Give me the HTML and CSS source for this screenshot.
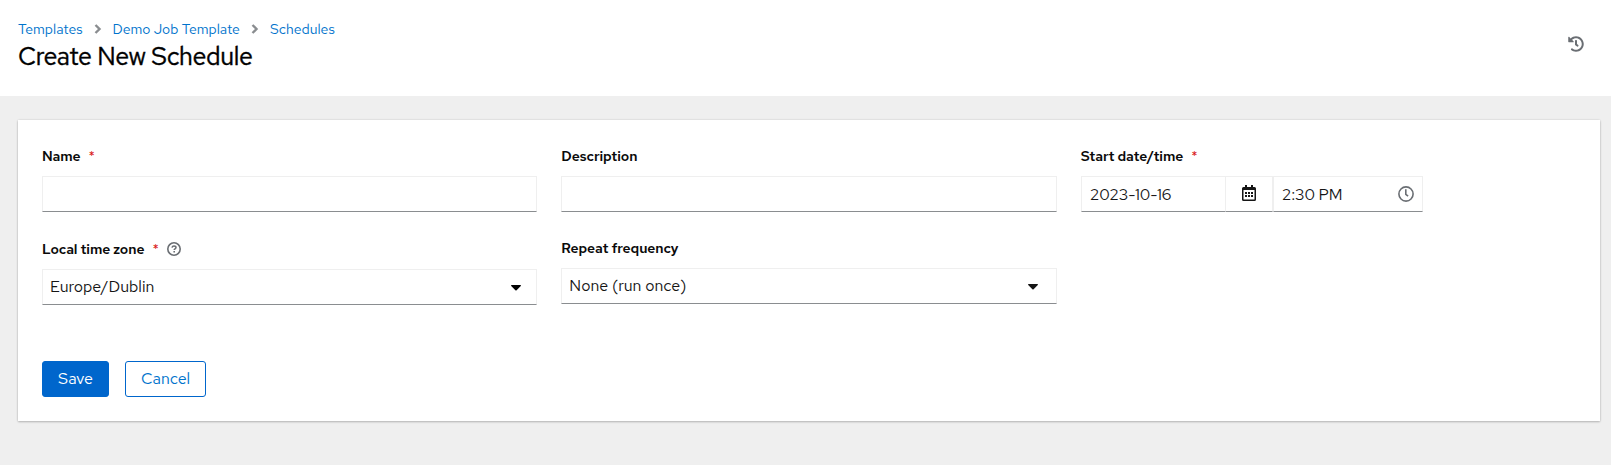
FILE: index.html
```html
<!DOCTYPE html>
<html lang="en">
<head>
<meta charset="utf-8">
<title>Create New Schedule</title>
<link rel="stylesheet" href="styles.css">
</head>
<body>
<header class="header">
  <div>
    <nav class="crumbs">
      <a class="c1">Templates</a>
      <svg class="chev" viewBox="0 0 8 10"><path d="M1.500 1l4 4-4 4" fill="none" stroke="#8a8d90" stroke-width="2.400"/></svg>
      <a class="c2">Demo Job Template</a>
      <svg class="chev" viewBox="0 0 8 10"><path d="M1.500 1l4 4-4 4" fill="none" stroke="#8a8d90" stroke-width="2.400"/></svg>
      <a class="c3">Schedules</a>
    </nav>
    <h1>Create New Schedule</h1>
  </div>
  <svg class="history" viewBox="0 0 512 512"><path fill="#6a6e73" d="M504 255.531c.253 136.64-111.18 248.372-247.82 248.468-59.015.042-113.223-20.53-155.822-54.911-11.077-8.94-11.905-25.541-1.839-35.607l11.267-11.267c8.609-8.609 22.353-9.551 31.891-1.984C173.062 425.135 212.781 440 256 440c101.705 0 184-82.311 184-184 0-101.705-82.311-184-184-184-48.814 0-93.149 18.969-126.068 49.932l50.754 50.754c10.08 10.08 2.941 27.314-11.313 27.314H24c-8.837 0-16-7.163-16-16V38.627c0-14.254 17.234-21.393 27.314-11.314l49.372 49.372C129.209 34.136 189.552 8 256 8c136.81 0 247.747 110.78 248 247.531zm-180.912 78.784l9.823-12.63c8.138-10.463 6.253-25.542-4.21-33.679L288 256.349V152c0-13.255-10.745-24-24-24h-16c-13.255 0-24 10.745-24 24v135.651l65.409 50.874c10.463 8.137 25.541 6.253 33.679-4.21z"/></svg>
</header>
<main>
  <form class="card">
    <div class="grid">
      <div class="field">
        <div class="label"><span>Name</span><b class="req">*</b></div>
        <div class="input"></div>
      </div>
      <div class="field">
        <div class="label"><span>Description</span></div>
        <div class="input"></div>
      </div>
      <div class="field">
        <div class="label"><span>Start date/time</span><b class="req">*</b></div>
        <div class="datetime">
          <div class="input date"><span>2023-10-16</span></div>
          <div class="input cal">
            <svg viewBox="0 0 14 16"><path fill="#151515" fill-rule="evenodd" d="M3 0h2v2h4V0h2v2h1.500a1.500 1.500 0 0 1 1.500 1.500v11a1.500 1.500 0 0 1-1.500 1.500h-11A1.500 1.500 0 0 1 0 14.500v-11A1.500 1.500 0 0 1 1.500 2H3zM1.500 5v9.500h11V5zM3 7h2v2H3zm3 0h2v2H6zm3 0h2v2H9zM3 10h2v2H3zm3 0h2v2H6zm3 0h2v2H9z"/></svg>
          </div>
          <div class="input time"><span>2:30 PM</span>
            <svg viewBox="0 0 16 16" fill="none" stroke="#6a6e73"><circle cx="8" cy="8" r="7.100" stroke-width="1.600"/><path d="M7.800 3.300v5l2.300 1.900" stroke-width="1.600"/></svg>
          </div>
        </div>
      </div>
      <div class="field">
        <div class="label tall"><span>Local time zone</span><b class="req">*</b>
          <svg class="help" viewBox="0 0 14 14" fill="none" stroke="#6a6e73"><circle cx="7" cy="7" r="6.200" stroke-width="1.600"/><path d="M5 5.600C5.200 4.500 6 4 7 4c1.200 0 2 .7 2 1.600 0 1.300-1.800 1.300-1.800 2.500" stroke-width="1.500"/><path d="M7.200 9v1.600" stroke-width="1.600"/></svg>
        </div>
        <div class="input select"><span>Europe/Dublin</span>
          <svg viewBox="0 0 10 6"><path fill="#000" d="M.7 0h8.600c.6 0 .9.700.5 1.100L5.600 5.300a.9.9 0 0 1-1.200 0L.2 1.100C-.2.700.1 0 .7 0z"/></svg>
        </div>
      </div>
      <div class="field">
        <div class="label"><span>Repeat frequency</span></div>
        <div class="input select freq"><span>None (run once)</span>
          <svg viewBox="0 0 10 6"><path fill="#151515" d="M.7 0h8.600c.6 0 .9.700.5 1.100L5.600 5.300a.9.9 0 0 1-1.200 0L.2 1.100C-.2.700.1 0 .7 0z"/></svg>
        </div>
      </div>
    </div>
    <div class="actions">
      <button type="button" class="btn save">Save</button>
      <button type="button" class="btn cancel">Cancel</button>
    </div>
  </form>
</main>
</body>
</html>
```
FILE: styles.css
```css
* { box-sizing: border-box; }
body {
  margin: 0;
  height: 465px;
  background: #efefef;
  color: #151515;
  font-family: "Red Hat Text", Inter, "Open Sans", sans-serif;
  font-size: 16px;
  overflow: hidden;
}
svg { display: block; flex: none; }
span, a { white-space: nowrap; }
.header {
  height: 96px;
  background: #fff;
  padding: 18px 27px 0 18px;
  display: flex;
  justify-content: space-between;
}
.crumbs { display: flex; align-items: center; height: 22px; font-size: 14px; color: #0073cc; }
.crumbs a { flex: none; }
.c1 { width: 75.5px; }
.c2 { width: 138.5px; }
.c3 { width: 66px; }
.chev { width: 8px; height: 10px; margin-right: 11px; }
h1 { margin: 1px 0 0; font-size: 25px; line-height: 31px; font-weight: 400; letter-spacing: -.35px; color: #000; -webkit-text-stroke: .4px #000; }
.history { width: 16px; height: 16px; margin-top: 18px; }
main { padding: 24px 11px 0 18px; }
.card {
  height: 301px;
  background: #fff;
  padding: 24px;
  box-shadow: 0 1px 2px rgba(3, 3, 3, .22), 0 0 2px rgba(3, 3, 3, .12);
}
.grid { display: grid; grid-template-columns: repeat(3, 1fr); gap: 24px; }
.label { display: flex; height: 32px; font-size: 14px; line-height: 24px; font-weight: 600; letter-spacing: -.08px; color: #0a0a0a; }
.label.tall { height: 33px; line-height: 26px; }
.req { color: #d91a1a; font-weight: 400; margin-left: 8px; font-size: 14px; letter-spacing: 0; }
.help { width: 14px; height: 14px; margin: 6px 0 0 8px; }
.input {
  height: 36px;
  border: 1px solid #efefef;
  border-bottom-color: #8a8d90;
  padding: 0 8px 0 7px;
  display: flex;
  align-items: center;
  justify-content: space-between;
  font-weight: 400;
}
.datetime { display: flex; }
.date { width: 145px; padding-left: 8px; letter-spacing: -.1px; }
.cal { width: 47px; border-left: 0; padding: 0; justify-content: center; }
.cal svg { width: 14px; height: 16px; margin-bottom: 2px; }
.time { width: 150px; padding-left: 8px; letter-spacing: -.1px; }
.time svg { width: 16px; height: 16px; }
.select { padding-right: 15px; padding-bottom: 1px; }
.select svg { width: 10px; height: 6px; margin-top: 2px; }
.freq { padding-right: 18px; }
.actions { display: flex; gap: 16px; margin-top: 56px; }
.btn {
  height: 36px;
  border-radius: 3px;
  border: 1px solid #06c;
  padding: 0;
  font: 400 16px/34px "Red Hat Text", Inter, "Open Sans", sans-serif;
}
.save { width: 67px; background: #06c; color: #fff; }
.cancel { width: 81px; background: #fff; color: #0073cc; }
```
